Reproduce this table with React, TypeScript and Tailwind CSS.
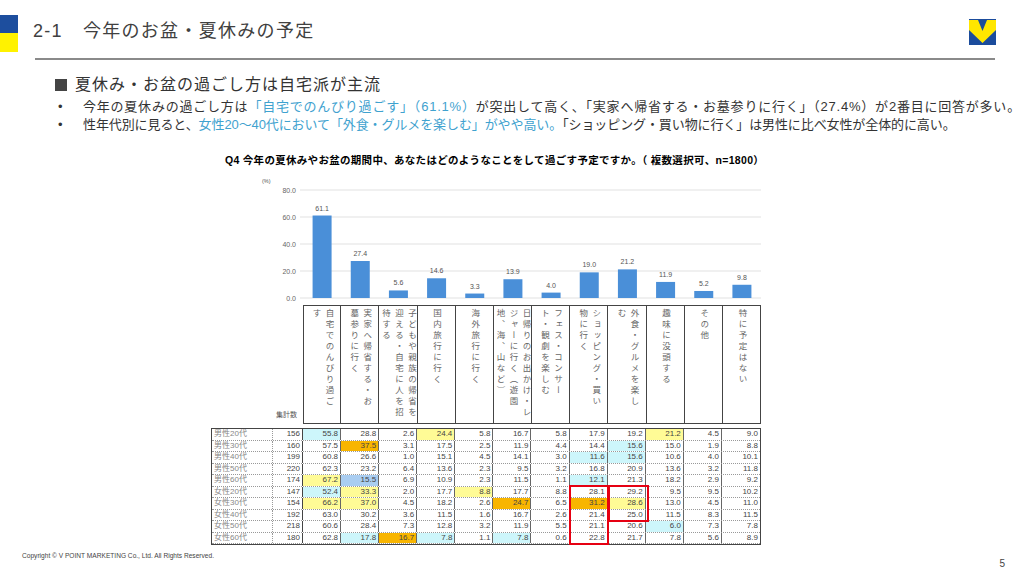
const COL_W = 458 / 12;

const bars = [61.1, 27.4, 5.6, 14.6, 3.3, 13.9, 4.0, 19.0, 21.2, 11.9, 5.2, 9.8];

const headers: string[][] = [
  ["自宅でのんびり過ご", "す"],
  ["実家へ帰省する・お", "墓参りに行く"],
  ["子どもや親族の帰省を", "迎える・自宅に人を招", "待する"],
  ["国内旅行に行く"],
  ["海外旅行に行く"],
  ["日帰りのお出かけ・レ", "ジャーに行く（遊園", "地、海、山など）"],
  ["フェス・コンサー", "ト・観劇を楽しむ"],
  ["ショッピング・買い", "物に行く"],
  ["外食・グルメを楽し", "む"],
  ["趣味に没頭する"],
  ["その他"],
  ["特に予定はない"],
];

// c = cyan, y = yellow, o = orange, b = blue
const fills: Record<string, string> = {
  c: "bg-[#cdf6fb]",
  y: "bg-[#fffb96]",
  o: "bg-[#f8b500]",
  b: "bg-[#a9cdf1]",
  "": "",
};

type Row = { label: string; n: number; cells: [string, string?][] };

const rows: Row[] = [
  { label: "男性20代", n: 156, cells: [["55.8", "c"], ["28.8"], ["2.6"], ["24.4", "y"], ["5.8"], ["16.7"], ["5.8"], ["17.9"], ["19.2"], ["21.2", "y"], ["4.5"], ["9.0"]] },
  { label: "男性30代", n: 160, cells: [["57.5"], ["37.5", "o"], ["3.1"], ["17.5"], ["2.5"], ["11.9"], ["4.4"], ["14.4"], ["15.6", "c"], ["15.0"], ["1.9"], ["8.8"]] },
  { label: "男性40代", n: 199, cells: [["60.8"], ["26.6"], ["1.0"], ["15.1"], ["4.5"], ["14.1"], ["3.0"], ["11.6", "c"], ["15.6", "c"], ["10.6"], ["4.0"], ["10.1"]] },
  { label: "男性50代", n: 220, cells: [["62.3"], ["23.2"], ["6.4"], ["13.6"], ["2.3"], ["9.5"], ["3.2"], ["16.8"], ["20.9"], ["13.6"], ["3.2"], ["11.8"]] },
  { label: "男性60代", n: 174, cells: [["67.2", "y"], ["15.5", "b"], ["6.9"], ["10.9"], ["2.3"], ["11.5"], ["1.1"], ["12.1", "c"], ["21.3"], ["18.2"], ["2.9"], ["9.2"]] },
  { label: "女性20代", n: 147, cells: [["52.4", "c"], ["33.3", "y"], ["2.0"], ["17.7"], ["8.8", "y"], ["17.7"], ["8.8"], ["28.1"], ["29.2"], ["9.5"], ["9.5"], ["10.2"]] },
  { label: "女性30代", n: 154, cells: [["66.2", "y"], ["37.0", "y"], ["4.5"], ["18.2"], ["2.6"], ["24.7", "o"], ["6.5"], ["31.2", "o"], ["28.6", "y"], ["13.0"], ["4.5"], ["11.0"]] },
  { label: "女性40代", n: 192, cells: [["63.0"], ["30.2"], ["3.6"], ["11.5"], ["1.6"], ["16.7"], ["2.6"], ["21.4"], ["25.0"], ["11.5"], ["8.3"], ["11.5"]] },
  { label: "女性50代", n: 218, cells: [["60.6"], ["28.4"], ["7.3"], ["12.8"], ["3.2"], ["11.9"], ["5.5"], ["21.1"], ["20.6"], ["6.0", "c"], ["7.3"], ["7.8"]] },
  { label: "女性60代", n: 180, cells: [["62.8"], ["17.8", "c"], ["16.7", "o"], ["7.8", "c"], ["1.1"], ["7.8", "c"], ["0.6"], ["22.8"], ["21.7"], ["7.8"], ["5.6"], ["8.9"]] },
];

function Logo() {
  return (
    <svg width="27" height="26" viewBox="0 0 27 26">
      <rect width="27" height="26" fill="#1b4c9c" />
      <polygon points="0,1 9,1 13.5,12 18,1 27,1 27,11 13.5,24 0,11" fill="#ffe600" />
    </svg>
  );
}

function BarChart() {
  return (
    <svg width="550" height="129" className="block">
      <text x="51" y="8" fontSize="5.5" fill="#555">(%)</text>
      {[80, 60, 40, 20, 0].map((t) => {
        const y = 123 - t * 1.35;
        return (
          <g key={t}>
            <line x1="89" x2="550" y1={y} y2={y} stroke="#d9d9d9" strokeWidth="0.8" />
            <text x="85" y={y + 2.5} textAnchor="end" fontSize="7" fill="#666">
              {t.toFixed(1)}
            </text>
          </g>
        );
      })}
      {bars.map((v, i) => {
        const cx = 92 + COL_W * (i + 0.5);
        const h = v * 1.35;
        return (
          <g key={i}>
            <rect x={cx - 9.5} y={123 - h} width="19" height={h} fill="#4a8fd8" />
            <text x={cx} y={123 - h - 5} textAnchor="middle" fontSize="7" fill="#555">
              {v.toFixed(1)}
            </text>
          </g>
        );
      })}
    </svg>
  );
}

export default function App() {
  return (
    <div className="w-[1024px] h-[576px] bg-white overflow-hidden text-[#333] font-['Liberation_Sans','Noto_Sans_CJK_JP',sans-serif]">
      {/* Header */}
      <div className="flex items-start h-[58px]">
        <div className="mt-[15px] w-[18px]">
          <div className="h-[18px] bg-[#1d4e9e]" />
          <div className="h-[19px] bg-[#fff200]" />
        </div>
        <div className="ml-[15px] mt-[19px] text-[18px] leading-[24px] tracking-[1.3px] text-[#404040]">
          <span>2-1</span>
          <span className="ml-[20px]">今年のお盆・夏休みの予定</span>
        </div>
        <div className="ml-auto mr-[28px] mt-[19px]">
          <Logo />
        </div>
      </div>
      <div className="ml-[35px] w-[960px] h-[2px] bg-[#8a8a8a]" />

      {/* Summary */}
      <div className="mt-[14px] ml-[55px] flex items-center text-[16px] leading-[22px] tracking-[1px] text-[#333]">
        <span className="w-[12px] h-[12px] bg-[#444]" />
        <span className="ml-[8px]">夏休み・お盆の過ごし方は自宅派が主流</span>
      </div>
      <ul className="mt-[2px] ml-[58px] text-[13px] leading-[18px] text-[#333]">
        <li className="flex">
          <span className="w-[25px]">•</span>
          <span className="tracking-[0.78px]">
            今年の夏休みの過ごし方は<span className="text-[#3fa2cf]">「自宅でのんびり過ごす」（61.1%）</span>が突出して高く、「実家へ帰省する・お墓参りに行く」（27.4%）が2番目に回答が多い。
          </span>
        </li>
        <li className="flex">
          <span className="w-[25px]">•</span>
          <span className="tracking-[-0.1px]">
            性年代別に見ると、<span className="text-[#3fa2cf]">女性20～40代において「外食・グルメを楽しむ」がやや高い。</span>「ショッピング・買い物に行く」は男性に比べ女性が全体的に高い。
          </span>
        </li>
      </ul>

      {/* Chart title */}
      <div className="mt-[19px] ml-[225px] text-[10.5px] leading-[14px] tracking-[0.3px] font-bold text-black">
        Q4 今年の夏休みやお盆の期間中、あなたはどのようなことをして過ごす予定ですか。（ 複数選択可、n=1800）
      </div>

      <div className="mt-[8px] ml-[211px] w-[550px]">
        <BarChart />

        {/* Header row with vertical labels */}
        <div className="mt-[1px] grid grid-cols-[92px_repeat(12,minmax(0,1fr))] h-[119px]">
          <div className="flex items-end justify-end pr-[6px] pb-[4px] text-[7px] text-[#555]">集計数</div>
          {headers.map((lines, i) => (
            <div
              key={i}
              className={`flex justify-center pt-[3px] border-y border-r border-[#444] ${i === 0 ? "border-l" : ""}`}
            >
              <div className="[writing-mode:vertical-rl] text-[8.5px] leading-[13px] tracking-[2.4px] text-[#666]">
                {lines.map((l, j) => (
                  <span key={j}>
                    {l}
                    {j < lines.length - 1 && <br />}
                  </span>
                ))}
              </div>
            </div>
          ))}
        </div>

        {/* Data rows */}
        <div className="relative mt-[4px] border border-[#444]">
          {rows.map((r) => (
            <div
              key={r.label}
              className="grid grid-cols-[61px_30px_repeat(12,minmax(0,1fr))] h-[11.5px] border-b border-dotted border-[#999] last:border-b-0 text-[8px] leading-[10.5px] text-[#444]"
            >
              <div className="pl-[2px] text-[#888] border-r border-dotted border-[#999]">{r.label}</div>
              <div className="text-right pr-[2px] border-r border-[#444]">{r.n}</div>
              {r.cells.map(([v, f], i) => (
                <div
                  key={i}
                  className={`text-right pr-[2px] ${i < 11 ? "border-r border-[#666]" : ""} ${fills[f ?? ""]}`}
                >
                  {v}
                </div>
              ))}
            </div>
          ))}
          <div className="absolute left-[357px] top-[56px] w-[40px] h-[60px] border-2 border-[#e60012]" />
          <div className="absolute left-[396px] top-[56px] w-[41px] h-[37px] border-2 border-[#e60012]" />
        </div>
      </div>

      {/* Footer */}
      <div className="mt-[7px] flex items-start justify-between pl-[22px] pr-[19px]">
        <div className="text-[6.6px] leading-[8px] text-[#444]">Copyright © V POINT MARKETING Co., Ltd. All Rights Reserved.</div>
        <div className="mt-[6px] text-[10px] leading-[12px] text-[#444]">5</div>
      </div>
    </div>
  );
}
